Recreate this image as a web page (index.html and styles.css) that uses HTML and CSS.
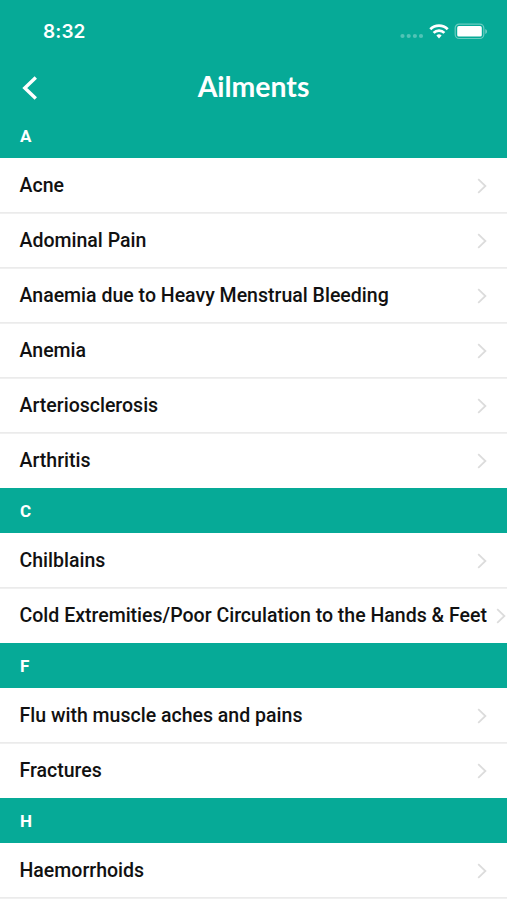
FILE: index.html
```
<!DOCTYPE html>
<html lang="en">
<head>
  <meta charset="UTF-8">
  <meta name="viewport" content="width=device-width, initial-scale=1.0">
  <title>Ailments</title>
  <link rel="stylesheet" href="styles.css">
</head>
<body>
  <header>
    <div class="status-bar">
      <span class="time">8:32</span>
      <svg class="status-icons" width="90" height="20" viewBox="0 0 90 20">
        <g fill="#fff" fill-opacity="0.3">
          <circle cx="4.5" cy="15" r="2.1"/>
          <circle cx="10.7" cy="15" r="2.1"/>
          <circle cx="16.9" cy="15" r="2.1"/>
          <circle cx="23" cy="15" r="2.1"/>
        </g>
        <g fill="none" stroke="#fff" stroke-width="2.7">
          <path d="M32.3 8.3a12 12 0 0 1 17.4 0"/>
          <path d="M35.6 11.9a7.5 7.5 0 0 1 10.8 0"/>
        </g>
        <path d="M41 17.4l-2.6-2.9a3.8 3.8 0 0 1 5.2 0z" fill="#fff"/>
        <rect x="57.2" y="3.1" width="28.6" height="14.4" rx="4" fill="none" stroke="#fff" stroke-opacity="0.4" stroke-width="1.2"/>
        <rect x="59.2" y="5.1" width="24.6" height="10.4" rx="1.6" fill="#fff"/>
        <path d="M87.3 7.9c2.2.8 2.2 4.2 0 5z" fill="#fff" fill-opacity="0.45"/>
      </svg>
    </div>
    <div class="nav-bar">
      <svg class="back" width="16" height="26" viewBox="0 0 16 26"><path d="M13.8 2.6L2.8 13l11 10.4"/></svg>
      <h1>Ailments</h1>
    </div>
  </header>
  <main>
    <h2>A</h2>
    <ul>
      <li>Acne <svg class="arrow" viewBox="0 0 10 16"><path d="M1.2 1.2L8.4 8l-7.2 6.8"/></svg></li>
      <li>Adominal Pain <svg class="arrow" viewBox="0 0 10 16"><path d="M1.2 1.2L8.4 8l-7.2 6.8"/></svg></li>
      <li>Anaemia due to Heavy Menstrual Bleeding <svg class="arrow" viewBox="0 0 10 16"><path d="M1.2 1.2L8.4 8l-7.2 6.8"/></svg></li>
      <li>Anemia <svg class="arrow" viewBox="0 0 10 16"><path d="M1.2 1.2L8.4 8l-7.2 6.8"/></svg></li>
      <li>Arteriosclerosis <svg class="arrow" viewBox="0 0 10 16"><path d="M1.2 1.2L8.4 8l-7.2 6.8"/></svg></li>
      <li>Arthritis <svg class="arrow" viewBox="0 0 10 16"><path d="M1.2 1.2L8.4 8l-7.2 6.8"/></svg></li>
    </ul>
    <h2>C</h2>
    <ul>
      <li>Chilblains <svg class="arrow" viewBox="0 0 10 16"><path d="M1.2 1.2L8.4 8l-7.2 6.8"/></svg></li>
      <li>Cold Extremities/Poor Circulation to the Hands &amp; Feet <svg class="arrow" viewBox="0 0 10 16"><path d="M1.2 1.2L8.4 8l-7.2 6.8"/></svg></li>
    </ul>
    <h2>F</h2>
    <ul>
      <li>Flu with muscle aches and pains <svg class="arrow" viewBox="0 0 10 16"><path d="M1.2 1.2L8.4 8l-7.2 6.8"/></svg></li>
      <li>Fractures <svg class="arrow" viewBox="0 0 10 16"><path d="M1.2 1.2L8.4 8l-7.2 6.8"/></svg></li>
    </ul>
    <h2>H</h2>
    <ul class="last">
      <li>Haemorrhoids <svg class="arrow" viewBox="0 0 10 16"><path d="M1.2 1.2L8.4 8l-7.2 6.8"/></svg></li>
    </ul>
  </main>
</body>
</html>
```
FILE: styles.css
```
* { box-sizing: border-box; }
body { margin: 0; height: 900px; overflow: hidden; background: #fff; font-family: Roboto, sans-serif; color: #111; }
header { height: 113.2px; background: #06aa97; color: #fff; }
.status-bar { display: flex; justify-content: space-between; align-items: center; height: 62px; padding: 0 19.5px 0 43px; }
.time { font-family: Inter, sans-serif; font-size: 19px; font-weight: 600; letter-spacing: 0.1px; }
.status-icons { display: block; }
.nav-bar { display: grid; grid-template-columns: 40px 1fr 40px; align-items: center; height: 51.2px; padding: 0 21px; }
.back { margin-left: 1px; }
.back path { fill: none; stroke: #fff; stroke-width: 3.4; }
h1 { margin: 0; padding-bottom: 3px; text-align: center; font-family: Lato, sans-serif; font-size: 28.4px; font-weight: 700; line-height: 34px; }
h2 { display: flex; align-items: center; height: 45.05px; margin: 0; padding: 0 20px; background: #06aa97; color: #fff; font-size: 17px; font-weight: 700; }
ul { margin: 0; padding: 0; list-style: none; }
li { display: flex; justify-content: space-between; align-items: center; gap: 9px; height: 55px; padding: 1px 20px 0 19.5px; border-bottom: 1px solid #ebebeb; box-shadow: 0 1px #f0f0f0; font-size: 19.53px; font-weight: 500; white-space: nowrap; }
li:last-child { border-bottom-color: transparent; box-shadow: none; }
.last li:last-child { border-bottom-color: #ebebeb; box-shadow: 0 1px #f0f0f0; }
.arrow { flex: none; width: 10px; height: 16px; }
.arrow path { fill: none; stroke: #dcdcdc; stroke-width: 1.8; }
```
